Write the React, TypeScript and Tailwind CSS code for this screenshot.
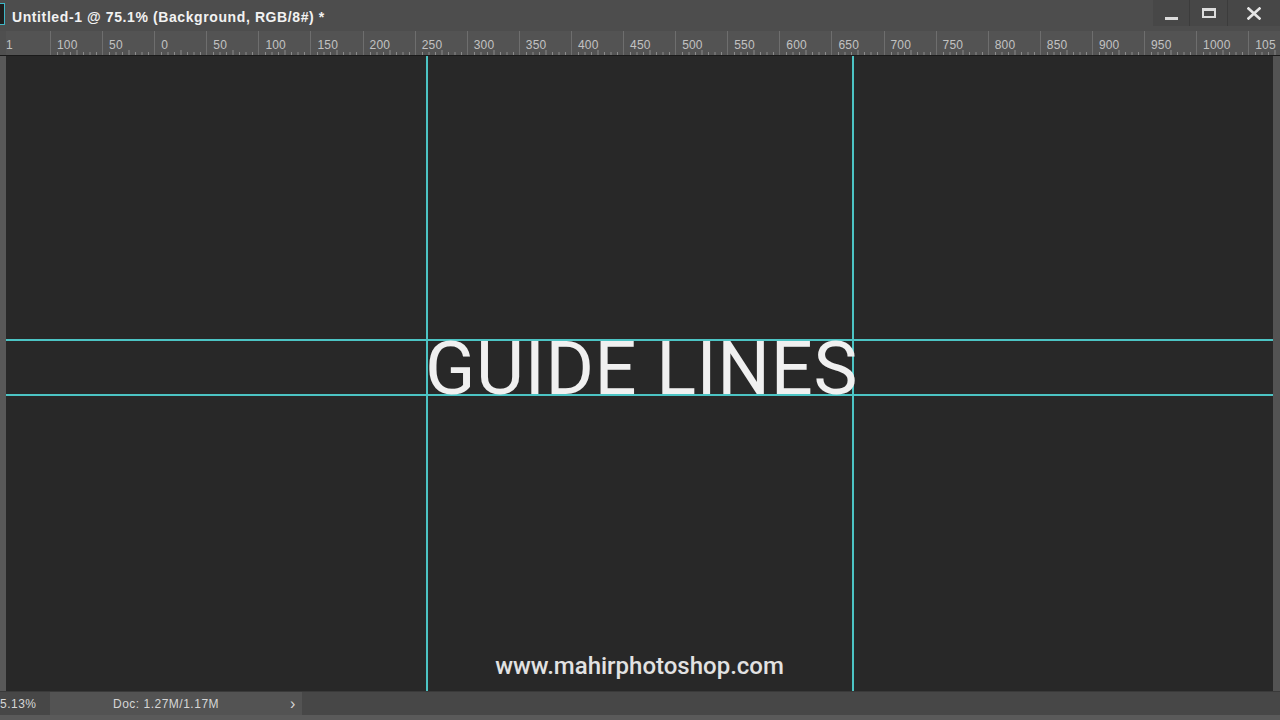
import React from "react";

const labels = ["1", "100", "50", "0", "50", "100", "150", "200", "250", "300", "350", "400", "450", "500", "550", "600", "650", "700", "750", "800", "850", "900", "950", "1000", "105"];

function RulerCell({ label }: { label: string }) {
  return (
    <div className="relative h-full w-[52.1px] shrink-0 border-l border-[#6e6e6e]">
      <span className="absolute left-[6px] top-[8px] text-[12px] leading-none tracking-[0.2px] text-[#c2c2c2]">
        {label}
      </span>
      <svg className="absolute bottom-0 left-0" width="52" height="5" viewBox="0 0 52 5">
        {[6.5, 13, 19.5, 26, 32.5, 39, 45.5].map((x, i) => (
          <line key={i} x1={x} x2={x} y1={i === 3 ? 0 : 2} y2={5} stroke="#8a8a8a" strokeWidth="1" />
        ))}
      </svg>
    </div>
  );
}

export default function App() {
  const sans = { fontFamily: "'Liberation Sans', Arial, sans-serif" };
  const roboto = { fontFamily: "Roboto, 'Noto Sans', sans-serif" };
  return (
    <div className="flex h-[720px] w-[1280px] flex-col overflow-hidden bg-[#4b4b4b]" style={sans}>
      {/* Title / tab bar */}
      <div className="flex h-[31px] shrink-0 items-stretch bg-[#4d4d4d]">
        <div className="flex items-start pt-[3px]">
          <div className="h-[22px] w-[5px] border border-l-0 border-[#3fb6c6] bg-[#1e1e1e]" />
        </div>
        <div className="flex items-center pl-[7px] pt-[3px] text-[14px] font-bold tracking-[0.6px] text-[#f2f2f2]">
          Untitled-1 @ 75.1% (Background, RGB/8#) *
        </div>
        <div className="flex-1" />
        <div className="flex h-[26px] items-stretch bg-[#474747]">
          <div className="flex w-[37px] items-end justify-center border-r border-[#3c3c3c] pb-[6px]">
            <div className="h-[3px] w-[13px] bg-[#dcdcdc]" />
          </div>
          <div className="flex w-[38px] items-center justify-center border-r border-[#3c3c3c]">
            <div className="h-[10px] w-[14px] border-2 border-t-[3px] border-[#dcdcdc]" />
          </div>
          <div className="flex w-[52px] items-center justify-center">
            <svg width="14" height="13" viewBox="0 0 14 13">
              <path d="M1.5 1.5 L12.5 11.5 M12.5 1.5 L1.5 11.5" stroke="#e6e6e6" strokeWidth="2.6" strokeLinecap="square" />
            </svg>
          </div>
        </div>
      </div>
      {/* Horizontal ruler */}
      <div className="flex h-[25px] shrink-0 border-b border-[#1a1a1a] bg-[#535353]">
        <div className="h-full w-[6px] shrink-0 bg-[#4f4f4f]" />
        <div className="flex h-full flex-1 overflow-hidden">
          <div className="relative h-full w-[44px] shrink-0">
            <span className="absolute left-[0px] top-[8px] text-[12px] leading-none text-[#c2c2c2]">1</span>
          </div>
          {labels.slice(1).map((l, i) => (
            <RulerCell key={i} label={l} />
          ))}
        </div>
      </div>
      {/* Canvas area */}
      <div className="flex min-h-0 flex-1">
        <div className="w-[6px] shrink-0 bg-[#585858]" />
        <div className="relative flex flex-1 flex-col items-center bg-[#282828]">
          {/* guides */}
          <div className="absolute bottom-0 left-[420px] top-0 w-[2px] bg-[#4cc4c4]" />
          <div className="absolute bottom-0 left-[846px] top-0 w-[2px] bg-[#4cc4c4]" />
          <div className="absolute left-0 right-0 top-[283px] h-[2px] bg-[#4cc4c4]" />
          <div className="absolute left-0 right-0 top-[338px] h-[2px] bg-[#4cc4c4]" />
          <div className="relative ml-[4px] mt-[276px] text-[74px] leading-none tracking-[0.6px] text-[#f0f0f0]" style={roboto}>
            GUIDE LINES
          </div>
          <div className="relative mt-[242px] text-[24px] font-medium text-[#e2e2e2]" style={roboto}>
            www.mahirphotoshop.com
          </div>
        </div>
        <div className="w-[7px] shrink-0 bg-[#535353]" />
      </div>
      {/* Status bar */}
      <div className="flex h-[24px] shrink-0 items-stretch border-t border-[#3a3a3a] bg-[#474747] text-[12px] tracking-[0.5px] text-[#d6d6d6]">
        <div className="flex w-[50px] items-center">5.13%</div>
        <div className="relative flex w-[252px] items-center bg-[#535353]">
          <span className="ml-[63px]">Doc: 1.27M/1.17M</span>
          <span className="absolute left-[240px] text-[16px]">›</span>
        </div>
      </div>
      <div className="h-[5px] shrink-0 bg-[#5a5a5a]" />
    </div>
  );
}
